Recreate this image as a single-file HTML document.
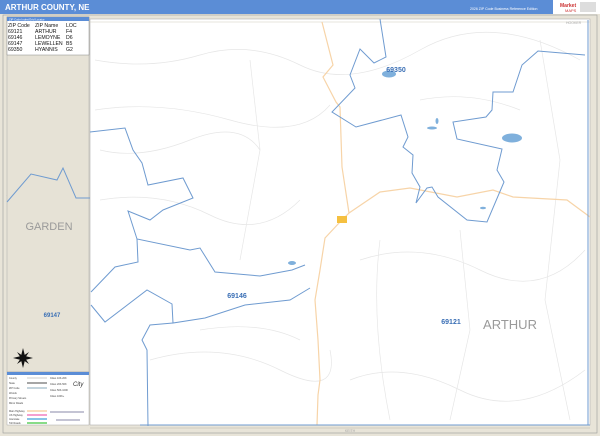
<!DOCTYPE html>
<html><head><meta charset="utf-8"><style>
html,body{margin:0;padding:0;width:600px;height:436px;overflow:hidden;background:#e8e4d8;font-family:"Liberation Sans",sans-serif}
</style></head><body>
<svg width="600" height="436" viewBox="0 0 600 436" xmlns="http://www.w3.org/2000/svg" style="position:absolute;left:0;top:0">
<rect x="0" y="0" width="600" height="436" fill="#e8e4d8"/>
<rect x="0" y="0" width="600" height="14" fill="#5b8dd6"/>
<text x="5" y="10" font-size="8" font-weight="bold" fill="#fff">ARTHUR COUNTY, NE</text>
<text x="470" y="10" font-size="3.5" fill="#fff">2026 ZIP Code Business Reference Edition</text>
<rect x="553" y="0" width="47" height="14" fill="#fff"/>
<text x="560" y="7" font-size="5" font-weight="bold" fill="#c33">Market</text>
<text x="565" y="12" font-size="4" fill="#c33">MAPS</text>
<rect x="580" y="2" width="16" height="10" fill="#ddd"/>
<rect x="3" y="15" width="594" height="418" fill="none" stroke="#9a9a9a" stroke-width="0.6"/>
<rect x="90" y="19" width="500" height="406" fill="#fff" stroke="#b0b0b0" stroke-width="0.6"/>
<line x1="90" y1="22" x2="590" y2="22" stroke="#cfcabb" stroke-width="0.5"/>
<line x1="90" y1="428" x2="590" y2="428" stroke="#b8b4a8" stroke-width="0.5"/>
<g fill="none" stroke="#e6e6e6" stroke-width="0.7">
<path d="M95 60 Q150 70 200 55 T300 65 T420 50 T580 60"/>
<path d="M95 110 Q160 100 230 120 T330 105"/>
<path d="M100 200 Q160 190 210 215 T300 200"/>
<path d="M360 260 Q420 240 480 270 T585 250"/>
<path d="M150 360 Q220 340 280 370 T330 350"/>
<path d="M350 380 Q400 360 460 390 T585 370"/>
<path d="M250 60 L260 150 L240 260"/>
<path d="M460 230 L470 330 L450 420"/>
<path d="M540 40 L560 160 L545 300 L570 420"/>
<path d="M380 240 Q370 320 390 420"/>
<path d="M200 330 Q260 320 300 340"/>
<path d="M100 150 Q140 160 190 140 T260 150"/>
<path d="M420 100 Q470 90 520 110"/>
</g>
<g fill="none" stroke="#f7d4a8" stroke-width="1.2">
<path d="M322 22 L333 65 L323 77 L336 102 L340 107 L342 167 L349 213 L340 222 L325 238 L320 270 L315 300 L318 340 L320 380 L318 395 L317 425"/>
<path d="M349 213 L380 192 L410 188 L457 197 L493 190 L513 197 L567 200 L590 217"/>
</g>
<rect x="337" y="216" width="10" height="7" fill="#f5c040"/>
<g fill="#7fb0dc">
<ellipse cx="389" cy="74" rx="7" ry="3.5"/>
<ellipse cx="512" cy="138" rx="10" ry="4.5"/>
<ellipse cx="292" cy="263" rx="4" ry="2"/>
<ellipse cx="432" cy="128" rx="5" ry="1.5"/>
<ellipse cx="437" cy="121" rx="1.5" ry="3"/>
<ellipse cx="483" cy="208" rx="3" ry="1.3"/>
</g>
<g fill="none" stroke="#6f9bd0" stroke-width="1">
<path d="M380 19 L386 57 L374 63 L360 49 L350 75 L355 88 L332 112 L356 127 L401 115 L408 137 L403 147 L413 155 L412 173 L420 187 L416 203 L427 188 L432 187 L438 197 L467 220 L487 222 L504 182 L497 170 L502 149 L457 139 L453 122 L486 117 L492 110 L493 92 L513 92 L522 65 L538 51 L585 55"/>
<path d="M90 132 L125 128 L133 150 L142 163 L148 185 L183 178 L193 198 L163 210 L150 220 L128 211 L137 239 L190 250 L200 248 L215 272 L260 276 L292 270 L305 265"/>
<path d="M137 239 L138 262 L115 267 L91 292"/>
<path d="M91 305 L105 322 L147 290 L172 304 L173 323 L205 318 L245 305 L290 300 L310 288"/>
<path d="M173 323 L150 325 L142 340 L147 350 L148 426"/>
<path d="M140 425 L590 425"/>
<path d="M588 20 L588 425"/>
<path d="M7 196 L31 174 L57 180 L63 168 L76 198 L90 198"/>
</g>
<rect x="7" y="17" width="82" height="355" fill="#e6e2d6" stroke="#aaa" stroke-width="0.5"/>
<path d="M7 202 L31 174 L57 180 L63 168 L76 198 L90 198" fill="none" stroke="#6f9bd0" stroke-width="1"/>
<rect x="7" y="17" width="82" height="38" fill="#fff" stroke="#888" stroke-width="0.5"/>
<rect x="7" y="17" width="82" height="4" fill="#5b8dd6"/>
<text x="9" y="20.3" font-size="2.8" fill="#fff">ZIP Code Index/Grid Locator</text>
<g font-size="5.2" fill="#111">
<text x="8" y="27">ZIP Code</text><text x="35" y="27">ZIP Name</text><text x="66" y="27">LOC</text>
<text x="8" y="33">69121</text><text x="35" y="33">ARTHUR</text><text x="66" y="33">F4</text>
<text x="8" y="39">69146</text><text x="35" y="39">LEMOYNE</text><text x="66" y="39">D6</text>
<text x="8" y="45">69147</text><text x="35" y="45">LEWELLEN</text><text x="66" y="45">B5</text>
<text x="8" y="51">69350</text><text x="35" y="51">HYANNIS</text><text x="66" y="51">G2</text>
</g>
<text x="49" y="230" font-size="11" fill="#9a9a9a" text-anchor="middle">GARDEN</text>
<text x="52" y="317" font-size="6" font-weight="bold" fill="#3a6fb5" text-anchor="middle">69147</text>
<g transform="translate(23,358)" fill="#111">
<polygon points="0,-10 2,-2 0,0 -2,-2"/><polygon points="0,10 2,2 0,0 -2,2"/>
<polygon points="-10,0 -2,-2 0,0 -2,2"/><polygon points="10,0 2,-2 0,0 2,2"/>
<polygon points="-6,-6 0,-2 0,0 -2,0"/><polygon points="6,-6 2,0 0,0 0,-2"/>
<polygon points="-6,6 0,2 0,0 -2,0"/><polygon points="6,6 2,0 0,0 0,2"/>
</g>
<rect x="7" y="372" width="82" height="53" fill="#fff" stroke="#999" stroke-width="0.4"/>
<rect x="7" y="372" width="82" height="3" fill="#5b8dd6"/>
<g stroke-width="1" fill="none">
<line x1="27" y1="378" x2="47" y2="378" stroke="#ccc"/>
<line x1="27" y1="383" x2="47" y2="383" stroke="#888" stroke-width="1.5"/>
<line x1="27" y1="388" x2="47" y2="388" stroke="#8ab"/>
<line x1="27" y1="411" x2="47" y2="411" stroke="#f7d4a8" stroke-width="1.5"/>
<line x1="27" y1="415" x2="47" y2="415" stroke="#f080c0" stroke-width="1.5"/>
<line x1="27" y1="419" x2="47" y2="419" stroke="#60b0e0" stroke-width="1.5"/>
<line x1="27" y1="423" x2="47" y2="423" stroke="#60d060" stroke-width="1.5"/>
<line x1="50" y1="412" x2="84" y2="412" stroke="#88a"/>
<line x1="56" y1="420" x2="80" y2="420" stroke="#88a"/>
</g>
<g font-size="2.5" fill="#444">
<text x="9" y="379">County</text><text x="9" y="384">State</text><text x="9" y="389">ZIP Code</text>
<text x="9" y="394">Woods</text><text x="9" y="399">Primary Streets</text><text x="9" y="404">Minor Roads</text>
<text x="9" y="412">Main Highway</text><text x="9" y="416">US Highway</text><text x="9" y="420">Interstate</text><text x="9" y="424">Toll Roads</text>
<text x="50" y="379">Cities 10K-20K</text><text x="50" y="385">Cities 20K-50K</text><text x="50" y="391">Cities 50K-100K</text><text x="50" y="397">Cities 100K+</text>
</g>
<text x="73" y="386" font-size="6" font-style="italic" fill="#333">City</text>
<text x="396" y="72" font-size="7" font-weight="bold" fill="#3a6fb5" text-anchor="middle">69350</text>
<text x="237" y="298" font-size="7" font-weight="bold" fill="#3a6fb5" text-anchor="middle">69146</text>
<text x="451" y="324" font-size="7" font-weight="bold" fill="#3a6fb5" text-anchor="middle">69121</text>
<text x="510" y="329" font-size="13" fill="#9a9a9a" text-anchor="middle">ARTHUR</text>
<text x="566" y="24" font-size="3.5" fill="#aaa">HOOKER</text>
<text x="350" y="432" font-size="3.5" fill="#aaa" text-anchor="middle">KEITH</text>
</svg>
</body></html>
